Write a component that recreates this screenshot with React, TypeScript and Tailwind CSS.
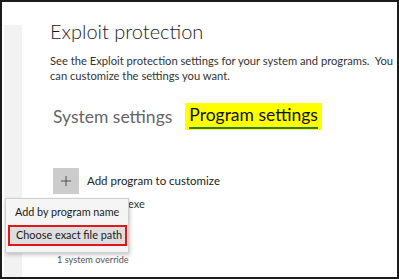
import { Plus } from "lucide-react"

const font = { fontFamily: 'Lato, "Noto Sans", sans-serif' }

export default function App() {
    return (
        <div className="relative flex h-[279px] w-[399px] overflow-hidden border-2 border-[#1c1c1c] bg-white text-[#1a1a1a]" style={font}>
            <div className="flex pl-[2px] pt-[23px]">
                <div className="w-[18px] bg-[#f2f2f2]" />
            </div>
            <main className="flex flex-1 flex-col pl-[28px] whitespace-nowrap">
                <h1 className="mt-[16px] text-[20px] font-light leading-[26px]">Exploit protection</h1>
                <p className="mt-[9px] text-[11.2px] leading-[15px] text-[#333]">
                    See the Exploit protection settings for your system and programs.&nbsp; You
                    <br />
                    can customize the settings you want.
                </p>
                <div className="mt-[20px] flex items-center">
                    <span className="ml-[3px] text-[17.5px] leading-[27px] text-[#666]">System settings</span>
                    <span className="ml-[13px] flex h-[27px] flex-col bg-[#ffff00] px-[4px]">
                        <span className="text-[17.5px] leading-[24px] text-[#111]">Program settings</span>
                        <span className="mb-[1px] h-[2px] w-full bg-[#2a7a32]" />
                    </span>
                </div>
                <div className="mt-[38px] flex items-center">
                    <div className="ml-[3px] flex h-[26px] w-[26px] items-center justify-center bg-[#cccccc]">
                        <Plus className="h-[16px] w-[16px] text-[#333]" strokeWidth={1.2} />
                    </div>
                    <span className="ml-[8px] text-[11.5px] text-[#222]">Add program to customize</span>
                </div>
                <div className="ml-[37px] mt-[4px] flex flex-col">
                    <span className="text-[11px] leading-[11px] text-[#333]">iexplore.exe</span>
                    <span className="text-[10px] leading-[12px] text-[#666]">File name</span>
                </div>
                <span className="ml-[7px] mt-[33px] text-[9.2px] leading-[12px] text-[#555]">1 system override</span>
            </main>
            <div className="absolute left-[3px] top-[196px] flex h-[55px] w-[124px] flex-col whitespace-nowrap border border-[#d0d0d0] bg-[#f5f5f5] shadow-[1px_2px_4px_rgba(0,0,0,0.22)]">
                <div className="flex h-[26px] items-center pl-[9px] text-[10.8px] text-[#1a1a1a]">Add by program name</div>
                <div className="ml-[2px] mr-[1px] flex h-[21px] items-center border-2 border-[#e0161b] bg-[#dedede] pl-[6px] text-[10.9px] text-[#1a1a1a]">
                    Choose exact file path
                </div>
            </div>
        </div>
    )
}
